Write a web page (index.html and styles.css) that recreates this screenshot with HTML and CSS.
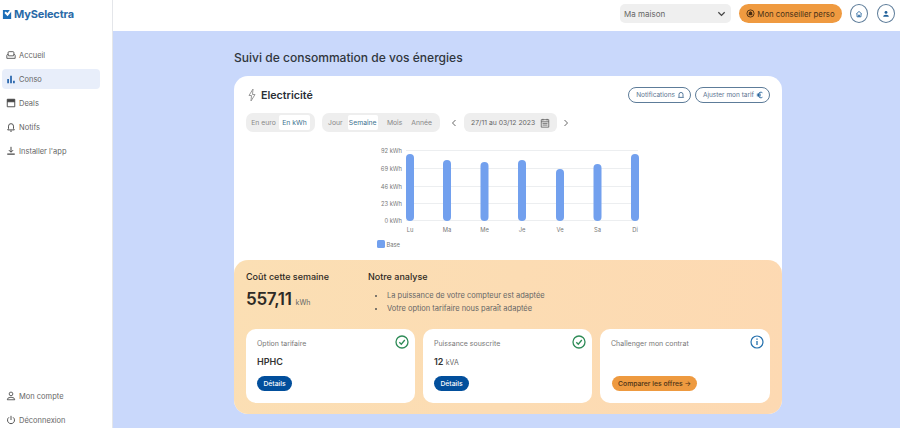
FILE: index.html
```html
<!DOCTYPE html>
<html lang="fr">
<head>
<meta charset="utf-8">
<title>MySelectra</title>
<link rel="stylesheet" href="styles.css">
</head>
<body>
<div class="app">
  <aside class="sidebar">
    <div class="logo">
      <svg class="logo-icon" viewBox="0 0 12 12"><path d="M1 1h7.500L6 4.400 4 2.800 2.600 4.300 6.100 8 10 3v8H1z" fill="#1d6fb8"/></svg>
      <span>MySelectra</span>
    </div>
    <nav class="nav">
      <a class="nav-item"><svg class="ico" viewBox="0 0 12 12"><path d="M2.500 6V3.200q0-1.200 1.200-1.200h4.600q1.200 0 1.200 1.200V6M1 6.500q0-1 1-1t1 1v.5h6v-.5q0-1 1-1t1 1V10H1z" fill="none" stroke="#444" stroke-width="1"/></svg>Accueil</a>
      <a class="nav-item active"><svg class="ico" viewBox="0 0 12 12"><path d="M1.500 6h2v5h-2zM5 2h2v9H5zM8.500 8h2v3h-2z" fill="#1f5fa8"/></svg>Conso</a>
      <a class="nav-item"><svg class="ico" viewBox="0 0 12 12"><path d="M1.500 1.500h9v9h-9zM1.500 4.500h9" fill="none" stroke="#444" stroke-width="1.100"/><path d="M1.500 1.500h9v3h-9z" fill="#444"/></svg>Deals</a>
      <a class="nav-item"><svg class="ico" viewBox="0 0 12 12"><path d="M2 9.500h8L9 8V5a3 3 0 0 0-6 0v3zM5 11h2" fill="none" stroke="#444" stroke-width="1.100"/></svg>Notifs</a>
      <a class="nav-item"><svg class="ico" viewBox="0 0 12 12"><path d="M6 1v6M3.500 5 6 7.500 8.500 5" fill="none" stroke="#444" stroke-width="1.200"/><path d="M1.500 9h9v1.500h-9z" fill="#444"/></svg>Installer l'app</a>
    </nav>
    <div class="nav nav-bottom">
      <a class="nav-item"><svg class="ico" viewBox="0 0 12 12"><circle cx="6" cy="3.500" r="2.200" fill="none" stroke="#444"/><path d="M1.500 10.500q0-3 4.500-3t4.500 3z" fill="none" stroke="#444"/></svg>Mon compte</a>
      <a class="nav-item"><svg class="ico" viewBox="0 0 12 12"><path d="M6 1v5M3.500 2.800a4.200 4.200 0 1 0 5 0" fill="none" stroke="#444" stroke-width="1.100"/></svg>Déconnexion</a>
    </div>
  </aside>
  <div class="main">
    <header class="topbar">
      <div class="select"><span>Ma maison</span><svg class="chev" viewBox="0 0 10 6"><path d="M1.500 1 5 4.500 8.500 1" fill="none" stroke="#444" stroke-width="1.400"/></svg></div>
      <button class="advisor"><svg class="ico-s" viewBox="0 0 10 10"><circle cx="5" cy="5" r="4" fill="none" stroke="#4a2c10" stroke-width="1"/><path d="M2.800 7 3.200 3.500 5 2.500l1.800 1 .4 3.500z" fill="#4a2c10"/></svg>Mon conseiller perso</button>
      <span class="round"><svg class="ico-r" viewBox="0 0 10 10"><path d="M1.500 5 5 1.800 8.500 5M2.500 4.500v4h5v-4M4.300 8.500V6.300h1.400v2.200" fill="none" stroke="#1f5f99" stroke-width="1"/></svg></span>
      <span class="round"><svg class="ico-r" viewBox="0 0 10 10"><circle cx="5" cy="3" r="1.800" fill="#1f5f99"/><path d="M1.500 8.500q0-2.500 3.500-2.500t3.500 2.500z" fill="#1f5f99"/></svg></span>
    </header>
    <main class="content">
      <h1 class="page-title">Suivi de consommation de vos énergies</h1>
      <section class="card">
        <div class="chart-part">
          <div class="head">
            <div class="head-title">
              <svg class="bolt" viewBox="0 0 10 14"><path d="M6 1 2 7.500h2.500L4 13l4-6.500H5.500z" fill="none" stroke="#999" stroke-width="1"/></svg>
              <h2>Electricité</h2>
            </div>
            <div class="head-actions">
              <button class="outline">Notifications<svg class="ico-o" viewBox="0 0 10 10"><path d="M1.800 8h6.400L7.500 6.800V4.300a2.500 2.500 0 0 0-5 0v2.500z" fill="none" stroke="#2d5b85" stroke-width="1"/></svg></button>
              <button class="outline">Ajuster mon tarif<svg class="ico-o" viewBox="0 0 10 10"><path d="M8 2.200Q6.800 1.500 6 1.500 3.200 1.500 3 5q.2 3.500 3 3.500.8 0 2-.7M1 4h5M1 6h5" fill="none" stroke="#1f5f99" stroke-width="1.200"/></svg></button>
            </div>
          </div>
          <div class="controls">
            <div class="seg seg-unit"><span>En euro</span><span class="on">En kWh</span></div>
            <div class="seg seg-period"><span>Jour</span><span class="on">Semaine</span><span>Mois</span><span>Année</span></div>
            <svg class="arrow" viewBox="0 0 6 8"><path d="M4.500 1 1.500 4l3 3" fill="none" stroke="#555" stroke-width=".9"/></svg>
            <div class="date"><span>27/11 au 03/12 2023</span><svg class="cal" viewBox="0 0 12 12"><path d="M1.500 2h9v9h-9zM1.500 4.500h9M3.500 1v2M8.500 1v2M3 6.500h6M3 8.500h6" fill="none" stroke="#555" stroke-width=".9"/></svg></div>
            <svg class="arrow" viewBox="0 0 6 8"><path d="M1.500 1 4.500 4l-3 3" fill="none" stroke="#555" stroke-width=".9"/></svg>
          </div>
          <svg class="chart" viewBox="0 0 300 112" width="300" height="112">
            <g class="grid">
              <path d="M32 7.500h232M32 25.500h232M32 43.500h232M32 60.500h232M32 77.500h232"/>
            </g>
            <g class="ylab">
              <text x="28" y="9.500">92 kWh</text>
              <text x="28" y="27.500">69 kWh</text>
              <text x="28" y="45.500">46 kWh</text>
              <text x="28" y="62.500">23 kWh</text>
              <text x="28" y="80">0 kWh</text>
            </g>
            <g class="bars">
              <rect x="32" y="11" width="8" height="67" rx="4"/>
              <rect x="69" y="17" width="8" height="61" rx="4"/>
              <rect x="106.500" y="19" width="8" height="59" rx="4"/>
              <rect x="144" y="17" width="8" height="61" rx="4"/>
              <rect x="182" y="26" width="8" height="52" rx="4"/>
              <rect x="219.500" y="21" width="8" height="57" rx="4"/>
              <rect x="257" y="11" width="8" height="67" rx="4"/>
            </g>
            <g class="xlab">
              <text x="36" y="89">Lu</text>
              <text x="73" y="89">Ma</text>
              <text x="110.500" y="89">Me</text>
              <text x="148" y="89">Je</text>
              <text x="186" y="89">Ve</text>
              <text x="223.500" y="89">Sa</text>
              <text x="261" y="89">Di</text>
            </g>
            <rect class="swatch" x="3" y="97" width="8" height="8" rx="1.500"/>
            <text class="legend" x="12.500" y="104">Base</text>
          </svg>
        </div>
        <div class="summary">
          <div class="summary-top">
            <div class="cost">
              <h3>Coût cette semaine</h3>
              <p class="amount"><strong>557,11</strong><span>kWh</span></p>
            </div>
            <div class="analysis">
              <h3>Notre analyse</h3>
              <ul>
                <li>La puissance de votre compteur est adaptée</li>
                <li>Votre option tarifaire nous paraît adaptée</li>
              </ul>
            </div>
          </div>
          <div class="tiles">
            <article class="tile">
              <svg class="status" viewBox="0 0 14 14"><circle cx="7" cy="7" r="6" fill="none" stroke="#2e8b57" stroke-width="1.300"/><path d="M4.300 7.200 6.300 9.200 9.800 5" fill="none" stroke="#2e8b57" stroke-width="1.300"/></svg>
              <p class="tile-label">Option tarifaire</p>
              <p class="tile-value">HPHC</p>
              <button class="blue">Détails</button>
            </article>
            <article class="tile">
              <svg class="status" viewBox="0 0 14 14"><circle cx="7" cy="7" r="6" fill="none" stroke="#2e8b57" stroke-width="1.300"/><path d="M4.300 7.200 6.300 9.200 9.800 5" fill="none" stroke="#2e8b57" stroke-width="1.300"/></svg>
              <p class="tile-label">Puissance souscrite</p>
              <p class="tile-value">12 <small>kVA</small></p>
              <button class="blue">Détails</button>
            </article>
            <article class="tile">
              <svg class="status" viewBox="0 0 14 14"><circle cx="7" cy="7" r="6" fill="none" stroke="#2470ad" stroke-width="1.200"/><path d="M7 6v4M7 3.600v1.200" fill="none" stroke="#2470ad" stroke-width="1.300"/></svg>
              <p class="tile-label">Challenger mon contrat</p>
              <p class="tile-value">&nbsp;</p>
              <button class="orange">Comparer les offres →</button>
            </article>
          </div>
        </div>
      </section>
    </main>
  </div>
</div>
</body>
</html>
```

FILE: styles.css
```css
* { box-sizing: border-box; }
html, body { margin: 0; height: 100%; }
body { font-family: Inter, "Liberation Sans", sans-serif; color: #333; overflow: hidden; }
p, h1, h2, h3, ul { margin: 0; padding: 0; }
button { font-family: inherit; border: 0; cursor: pointer; padding: 0; }

.app { display: flex; height: 428px; }

.sidebar { width: 113px; flex: none; background: #fff; border-right: 1px solid #e4e6ea; display: flex; flex-direction: column; padding: 0 12px 0 2px; }
.logo { display: flex; align-items: center; gap: 1px; height: 28px; color: #2a6aa8; font-size: 11px; font-weight: 700; letter-spacing: -.15px; }
.logo-icon { width: 11px; height: 11px; flex: none; }
.nav { display: flex; flex-direction: column; gap: 4px; margin-top: 17px; }
.nav-bottom { margin-top: auto; margin-bottom: -2px; }
.nav-item { display: flex; align-items: center; gap: 3px; height: 20px; padding-left: 4px; font-size: 7.500px; color: #666; border-radius: 4px; }
.nav-item.active { background: #e8eefa; }
.ico { width: 10px; height: 10px; flex: none; }

.main { flex: 1; min-width: 0; display: flex; flex-direction: column; background: #c9d8fb; }
.topbar { height: 31px; flex: none; background: #fff; display: flex; align-items: flex-start; justify-content: flex-end; padding: 4px 5px 0 0; }
.select { width: 111px; height: 19px; background: #efefef; border-radius: 5px; display: flex; align-items: center; justify-content: space-between; padding: 0 5px 0 4px; font-size: 8px; color: #666; margin-right: 8px; }
.chev { width: 9px; height: 6px; }
.advisor { width: 103px; height: 19px; background: #ef9a40; border-radius: 10px; display: flex; align-items: center; justify-content: center; gap: 2px; font-size: 7.800px; color: #4a3116; margin-right: 8px; }
.ico-s { width: 9px; height: 9px; }
.round { width: 18px; height: 19px; border: 1px solid #5d7c99; border-radius: 50%; display: flex; align-items: center; justify-content: center; margin-right: 9px; background: #fff; }
.round:last-child { margin-right: 0; }
.ico-r { width: 8px; height: 8px; }

.content { padding: 19px 118px 0 121px; }
.page-title { font-size: 12.050px; font-weight: 500; color: #30363d; line-height: 16px; margin-bottom: 10px; }

.card { background: #fff; border-radius: 14px; height: 338px; display: flex; flex-direction: column; }
.chart-part { height: 184px; padding: 11px 12px 0; flex: none; }
.head { display: flex; justify-content: space-between; align-items: center; height: 16px; }
.head-title { display: flex; align-items: center; gap: 4px; padding-left: 1px; }
.bolt { width: 10px; height: 14px; }
.head-title h2 { font-size: 10.700px; font-weight: 600; color: #2a2f36; }
.head-actions { display: flex; gap: 4px; }
.outline { height: 16px; border: 1px solid #5d7c99; border-radius: 8px; background: #fff; color: #5a7390; font-size: 6.500px; display: flex; align-items: center; gap: 2px; padding: 0 5px 0 7px; }
.ico-o { width: 8px; height: 8px; }

.controls { display: flex; align-items: center; margin-top: 10px; height: 19px; }
.seg { display: flex; height: 19px; background: #eeeeee; border-radius: 7px; padding: 2px 3px; font-size: 6.800px; color: #888; align-items: stretch; }
.seg span { display: flex; align-items: center; justify-content: center; }
.seg .on { background: #fff; color: #3e7390; border-radius: 2px; }
.seg-unit { width: 69px; margin-right: 7px; padding-left: 2px; }
.seg-unit span { flex: none; width: 31px; }
.seg-unit .on { width: 31px; }
.seg-period { width: 118px; margin-right: 11px; padding-left: 1px; }
.seg-period span { padding: 0 5px; }
.seg-period .on { width: 35px; padding: 0; margin-right: 4px; }
.seg-period span:last-child { padding-left: 4px; }
.arrow { width: 6px; height: 8px; flex: none; }
.date { width: 93px; height: 19px; background: #eeeeee; border-radius: 6px; margin: 0 6px 0 7px; display: flex; align-items: center; justify-content: space-between; padding: 0 7px; font-size: 6.800px; color: #666; }
.cal { width: 10px; height: 10px; }

.chart { display: block; margin: 11px 0 0 128px; }
.grid path { stroke: #eceef0; stroke-width: 1; fill: none; }
.ylab text, .xlab text, .legend { font-size: 5.800px; fill: #777; }
.ylab text { text-anchor: end; }
.xlab text { text-anchor: middle; }
.bars rect, .swatch { fill: #72a0ee; }

.summary { flex: 1; background: linear-gradient(100deg, #fbdfb4, #fdd9b2); border-radius: 14px; padding: 10px 12px 11px; display: flex; flex-direction: column; }
.summary-top { display: flex; height: 59px; }
.cost { width: 122px; }
.summary h3 { font-size: 9px; font-weight: 500; color: #2f2a24; line-height: 14px; }
.amount { display: flex; align-items: baseline; gap: 4px; margin-top: 4px; }
.amount strong { font-size: 17px; font-weight: 600; color: #2e2a25; line-height: 22px; letter-spacing: -.3px; }
.amount span { font-size: 7px; color: #666; }
.analysis ul { list-style: none; margin-top: 5px; }
.analysis li { font-size: 7.500px; color: #666; line-height: 13px; padding-left: 19px; position: relative; }
.analysis li::before { content: ""; position: absolute; left: 7px; top: 6px; width: 2px; height: 2px; border-radius: 50%; background: #555; }

.tiles { display: grid; grid-template-columns: 169px 169px 170px; gap: 8px; }
.tile { position: relative; height: 74px; background: #fff; border-radius: 10px; padding: 10px 11px 0; display: flex; flex-direction: column; align-items: flex-start; }
.status { position: absolute; top: 6px; right: 6px; width: 14px; height: 14px; }
.tile-label { font-size: 7px; color: #777; line-height: 10px; }
.tile-value { font-size: 9px; font-weight: 600; color: #333; line-height: 12px; margin-top: 7px; }
.tile-value small { font-size: 7px; font-weight: 400; color: #666; }
.blue, .orange { position: absolute; left: 11px; top: 47px; height: 15px; border-radius: 8px; font-size: 6.800px; font-weight: 500; }
.blue { width: 35px; background: #024f9c; color: #fff; }
.orange { left: 12px; width: 85px; background: #ee9a40; color: #4a3116; }
```
